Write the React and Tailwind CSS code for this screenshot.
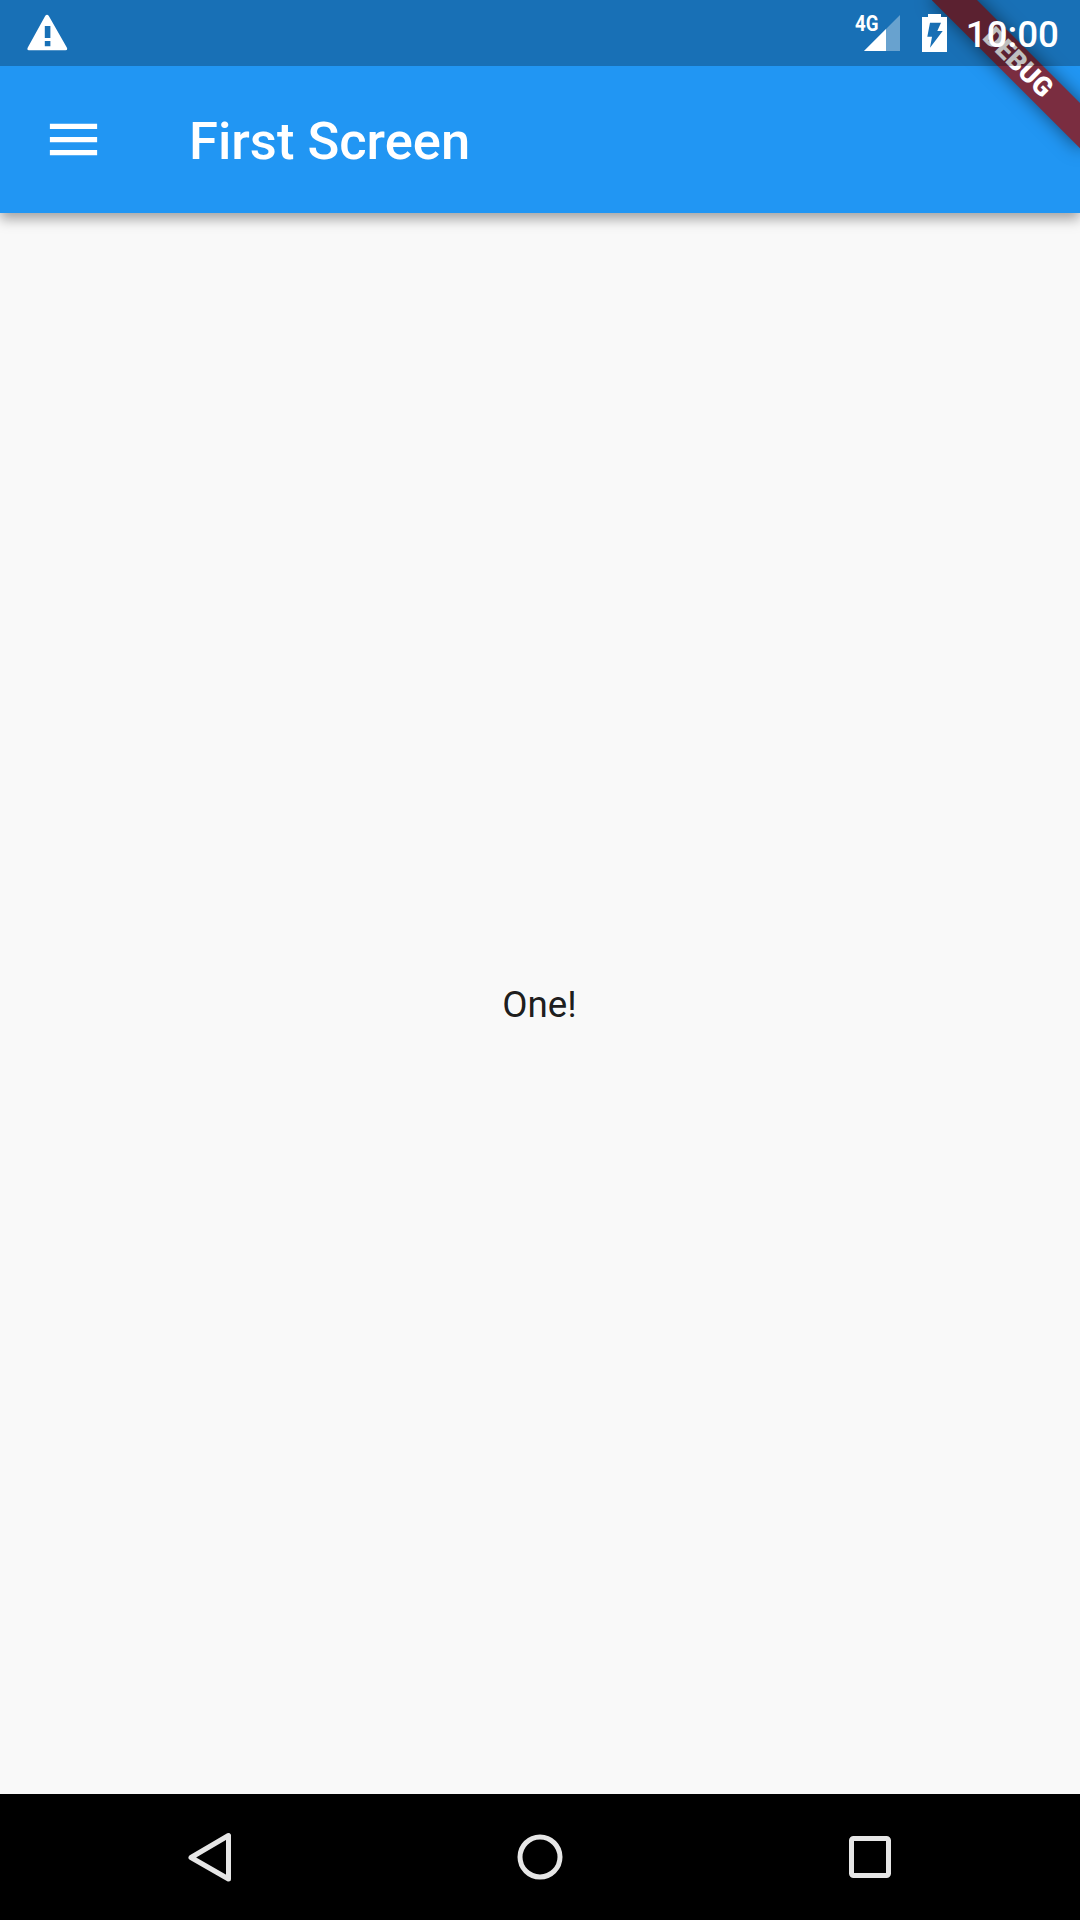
function StatusBar() {
  return (
    <div className="relative z-20 flex h-[66px] shrink-0 items-start bg-black/25 text-white">
      <svg className="ml-[27px] mt-[14px] h-[38px] w-[42px]" viewBox="27 14 42 38" fill="currentColor">
        <path
          fillRule="evenodd"
          d="M45.3 15.8Q47 13.5 48.7 15.8L66.8 47.5Q68 50.3 65.5 50.3H29Q26.5 50.3 27.8 47.5ZM44.8 26V38H50.4V26ZM44.8 41V46.3H50.4V41Z"
        />
      </svg>
      <div className="ml-auto flex">
        <span className="mt-[11px] w-[21px] origin-left scale-x-[0.83] whitespace-nowrap text-[22.5px] leading-[25px] font-bold">4G</span>
        <svg className="-ml-[13px] mt-[14px] h-[38px] w-[38px]" viewBox="863 14 38 38" fill="currentColor">
          <path d="M864 51L900 15V51Z" opacity="0.35" />
          <path d="M864 51L886 29V51Z" />
        </svg>
        <svg className="ml-[21px] mt-[14px] h-[38px] w-[25px]" viewBox="922 14 25 38" fill="currentColor">
          <path
            fillRule="evenodd"
            d="M928 14H941V17H947V52H922V17H928ZM930 22.7L927.3 36.7H932L930 47.7L942.7 31H937.3L941 22.7Z"
          />
        </svg>
        <span className="ml-[19px] mr-[21px] mt-[13px] whitespace-nowrap text-[36.75px] leading-[43px] font-medium">10:00</span>
      </div>
    </div>
  );
}

function DebugBanner() {
  return (
    <div className="absolute top-0 right-0 z-10 h-[213px] w-[213px] overflow-hidden">
      <div className="absolute top-[72.5px] left-[108px] h-[31.5px] w-[210px] origin-[50%_-72.5px] rotate-45 bg-[#7a2d40] text-center text-[26.8px] leading-[31.5px] font-black text-white shadow-[0_0_18px_rgba(0,0,0,0.5)]">
        DEBUG
      </div>
    </div>
  );
}

function AppBar() {
  return (
    <header className="flex h-[147px] shrink-0 items-center text-white">
      <svg className="ml-[42px] h-[63px] w-[63px]" viewBox="0 0 24 24" fill="currentColor">
        <path d="M3 18h18v-2H3v2zm0-5h18v-2H3v2zm0-7v2h18V6H3z" />
      </svg>
      <h1 className="ml-[84px] pt-[2px] text-[52.5px] leading-[62px] font-medium">First Screen</h1>
    </header>
  );
}

function NavigationBar() {
  return (
    <nav className="flex h-[126px] shrink-0 items-center justify-between bg-black px-[180px] text-[#e6e6e6]">
      <svg className="h-[60px] w-[60px]" viewBox="0 0 60 60" fill="none" stroke="currentColor" strokeWidth="5" strokeLinejoin="round">
        <path d="M48.5 8.5V52L11 30.5Z" />
      </svg>
      <svg className="h-[60px] w-[60px]" viewBox="0 0 60 60" fill="none" stroke="currentColor" strokeWidth="5">
        <circle cx="30" cy="30" r="20" />
      </svg>
      <svg className="h-[60px] w-[60px]" viewBox="0 0 60 60" fill="none" stroke="currentColor" strokeWidth="5">
        <rect x="11.5" y="11.5" width="37" height="37" rx="2" />
      </svg>
    </nav>
  );
}

export default function App() {
  return (
    <div className="relative flex h-[1920px] w-[1080px] flex-col overflow-hidden bg-[#f9f9f9] font-[Roboto,sans-serif]">
      <div className="relative z-10 flex flex-col bg-[#2196f3] shadow-[0_6px_12px_rgba(0,0,0,0.35)]">
        <StatusBar />
        <AppBar />
        <DebugBanner />
      </div>
      <main className="flex flex-1 items-center justify-center pt-[2px] pr-[1px] text-[36.75px] leading-[43px] text-black/90">One!</main>
      <NavigationBar />
    </div>
  );
}
